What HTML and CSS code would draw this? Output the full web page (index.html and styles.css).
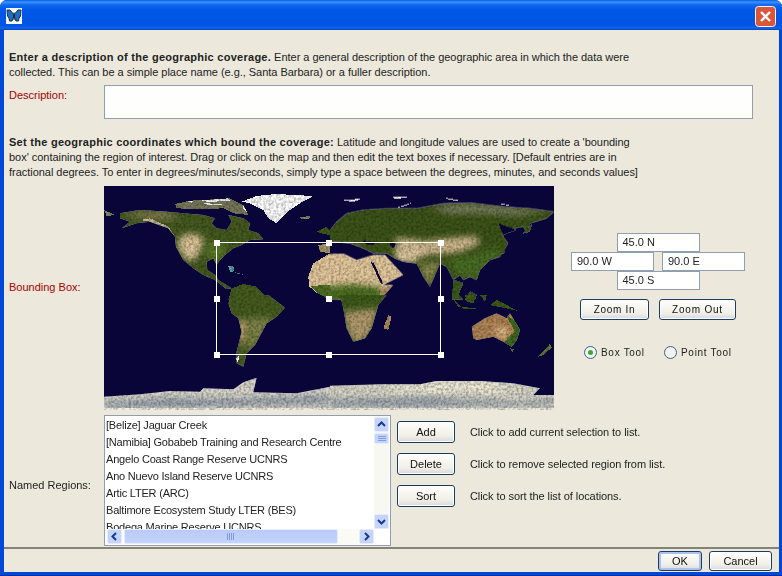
FILE: index.html
```html
<!DOCTYPE html>
<html>
<head>
<meta charset="utf-8">
<title>Geographic Coverage</title>
<link rel="stylesheet" href="styles.css">
</head>
<body>
<div class="window">
  <div class="titlebar">
    <svg class="app-icon" width="16" height="16" viewBox="0 0 16 16">
      <rect width="16" height="16" fill="#f4f8fc"/>
      <path d="M1 2 L4 2 L7.400 6 L7.600 9 L6 13 L3.500 13 L3 10 L1.500 8 Z" fill="#1c6fc0" stroke="#12304f" stroke-width="1"/>
      <path d="M15 2 L12 2 L8.600 6 L8.400 9 L10 13 L12.500 13 L13 10 L14.500 8 Z" fill="#1c6fc0" stroke="#12304f" stroke-width="1"/>
      <path d="M8 4.500 V12" stroke="#0c1c30" stroke-width="1"/>
    </svg>
    <svg class="close-icon" width="21" height="21" viewBox="0 0 21 21">
      <rect x=".5" y=".5" width="20" height="20" rx="3" fill="#d9563a" stroke="#f4f4f4"/>
      <path d="M6 6 L15 15 M15 6 L6 15" stroke="#fff" stroke-width="2.400"/>
    </svg>
  </div>
  <div class="content">
    <p class="intro intro-first"><b>Enter a description of the geographic coverage.</b> Enter a general description of the geographic area in which the data were<br>collected. This can be a simple place name (e.g., Santa Barbara) or a fuller description.</p>
    <div class="desc-row">
      <span class="label req desc-label">Description:</span>
      <div class="desc-box"></div>
    </div>
    <p class="intro intro-second"><b>Set the geographic coordinates which bound the coverage:</b> Latitude and longitude values are used to create a 'bounding<br>box' containing the region of interest. Drag or click on the map and then edit the text boxes if necessary. [Default entries are in<br>fractional degrees. To enter in degrees/minutes/seconds, simply type a space between the degrees, minutes, and seconds values]</p>
    <div class="map-row">
      <span class="label req map-label">Bounding Box:</span>
      <svg class="map" width="450" height="224" viewBox="0 0 450 224">
        <defs>
          <filter id="grain" x="0" y="0" width="100%" height="100%" color-interpolation-filters="sRGB">
            <feTurbulence type="fractalNoise" baseFrequency="0.4" numOctaves="2" seed="4" result="n"/>
            <feColorMatrix in="n" type="matrix" values=".7 0 0 0 .55  .7 0 0 0 .55  .7 0 0 0 .55  0 0 0 0 1" result="v"/>
            <feBlend in="SourceGraphic" in2="v" mode="multiply" result="m"/>
            <feComposite in="m" in2="SourceAlpha" operator="in"/>
          </filter>
          <filter id="soft" x="-30%" y="-30%" width="160%" height="160%"><feGaussianBlur stdDeviation="9"/></filter>
          <clipPath id="clip-na"><path d="M60,100 L120,90 L200,95 L250,100 L310,105 L345,115 L335,130 L350,145 L380,150 L395,125 L385,105 L430,115 L450,130 L445,150 L475,160 L490,178 L450,180 L425,195 L400,205 L375,225 L360,240 L350,255 L340,235 L320,245 L322,270 L345,285 L355,300 L370,310 L395,325 L380,328 L345,300 L310,285 L280,265 L250,240 L228,200 L225,170 L205,145 L150,125 L110,130 L65,145 L90,125 L60,115 Z"/></clipPath>
          <clipPath id="clip-eu"><path d="M20,125 L50,100 L100,90 L170,85 L260,85 L340,70 L420,68 L520,80 L600,85 L672,95 L650,115 L600,130 L590,160 L580,140 L530,150 L520,170 L535,190 L510,230 L480,240 L450,270 L440,300 L420,290 L400,300 L390,285 L370,300 L350,260 L330,250 L300,320 L280,290 L260,250 L220,245 L195,235 L170,220 L130,220 L100,205 L60,190 L0,185 L0,150 Z"/></clipPath>
          <clipPath id="clip-af"><path d="M0,222 L40,220 L80,240 L130,225 L165,225 L220,285 L160,315 L190,315 L150,360 H0 Z"/></clipPath>
          <clipPath id="clip-sa"><path d="M385,25 L395,0 L505,0 L555,38 L530,65 L500,85 L465,150 L440,175 L430,215 L410,205 L410,170 L425,110 L415,70 L395,55 Z"/></clipPath>
          <clipPath id="clip-sa2"><path d="M30,0 H170 L145,30 L125,100 L105,130 L70,140 L50,100 L40,40 Z"/></clipPath>
          <clipPath id="clip-au"><path d="M425,95 L465,70 L500,55 L530,70 L540,55 L570,105 L560,135 L545,155 L520,140 L490,125 L440,135 L430,130 Z"/></clipPath>
          <clipPath id="clip-an"><path d="M12,305 L120,298 L210,288 L300,290 L310,280 L400,283 L430,262 L470,248 L465,270 L460,292 L590,295 L690,275 V345 H12 Z"/></clipPath>
          <clipPath id="clip-an2"><path d="M0,272 L150,268 L270,268 L320,258 L450,258 L550,265 L630,280 L610,300 L672,300 V345 H0 Z"/></clipPath>
        </defs>
        <rect width="450" height="224" fill="#0a0538"/>
        <g filter="url(#grain)" class="land">
          <!-- north-west quadrant -->
          <g transform="translate(-4,-6) scale(.3333)">
            <path fill="#77785a" d="M225,72 L270,62 L390,55 L430,75 L445,105 L400,100 L370,85 L300,88 L230,85 Z"/>
            <path fill="#f2f2f2" d="M262,65 L280,62 L276,68 Z M300,62 L385,55 L390,62 L330,66 Z M310,70 L390,72 L330,76 Z M428,72 L440,95 L430,88 Z"/>
            <path fill="#fff" d="M425,65 L470,48 L530,42 L640,48 L600,70 L570,90 L530,130 L505,115 L490,90 L450,70 Z"/>
            <path fill="#7f8a66" d="M598,112 L632,108 L628,116 L605,116 Z M12,90 L45,105 L20,108 Z"/>
            <g clip-path="url(#clip-na)">
              <rect x="0" y="80" width="520" height="260" fill="#445a1e"/>
              <path fill="#7f7a50" filter="url(#soft)" d="M60,100 L200,90 L240,120 L130,120 Z"/>
              <path fill="#c8bc98" d="M120,120 L150,115 L205,140 L225,170 L215,160 L190,145 L150,125 Z"/>
              <path fill="#dcc498" filter="url(#soft)" d="M232,180 L262,160 L298,165 L312,182 L300,215 L285,240 L262,242 L238,210 Z"/>
              <path fill="#5f8028" filter="url(#soft)" d="M320,190 L350,185 L380,210 L350,245 L325,240 Z"/>
            </g>
            <path fill="#5aa8b0" d="M385,258 L400,258 L402,274 L390,276 Z"/>
            <path fill="#3f7f80" d="M404,276 L430,284 L412,282 Z"/>
            <path fill="#465c1e" d="M385,360 L395,325 L430,312 L470,320 L510,360 Z"/>
            <path fill="#a8966c" d="M655,195 L690,190 V220 L660,215 Z"/>
            <path fill="#3f5a1c" d="M650,155 L680,140 L690,150 V165 L670,162 Z"/>
            <path fill="#e4c89c" d="M625,290 L640,250 L690,220 V360 L650,338 L628,320 Z"/>
            <path fill="#4f7022" d="M632,318 L690,314 V360 L650,338 Z"/>
          </g>
          <!-- north-east quadrant -->
          <g transform="translate(226,-6) scale(.3333)">
            <path fill="#fff" d="M40,60 L95,56 L70,66 Z M172,52 L240,50 L205,56 Z M190,86 L250,66 L225,78 Z M342,52 L392,62 L360,60 Z M512,72 L560,74 L530,76 Z"/>
            <g clip-path="url(#clip-eu)">
              <rect x="0" y="60" width="672" height="300" fill="#3d5418"/>
              <path fill="#7c7f60" filter="url(#soft)" d="M300,80 L420,70 L540,82 L660,92 L560,108 L440,100 L350,100 Z"/>
              <path fill="#d0ba90" filter="url(#soft)" d="M195,172 L290,182 L340,175 L440,168 L450,190 L390,218 L300,225 L240,240 L205,240 Z"/>
              <path fill="#dcc69c" filter="url(#soft)" d="M190,210 L270,205 L260,245 L210,245 Z"/>
              <path fill="#4a6e20" filter="url(#soft)" d="M350,240 L440,220 L510,200 L510,240 L440,300 L380,290 Z"/>
              <path fill="#8a8a50" filter="url(#soft)" d="M265,250 L335,245 L300,320 L280,290 Z"/>
              <path fill="#a8966c" filter="url(#soft)" d="M0,190 L60,195 L100,208 L80,215 L0,210 Z"/>
            </g>
            <path fill="#0a0538" d="M180,185 L198,190 L192,205 L182,200 Z M100,183 L140,186 L130,194 L105,192 Z M505,130 L560,150 L520,165 Z"/>
            <path fill="#3d5a1a" d="M580,160 L608,130 L600,155 Z M490,232 L525,200 L525,218 Z"/>
            <g clip-path="url(#clip-af)">
              <rect x="0" y="210" width="240" height="150" fill="#e4c89c"/>
              <path fill="#4d7020" filter="url(#soft)" d="M-20,320 L70,312 L150,322 L170,370 H-20 Z"/>
              <path fill="#b48f62" d="M150,330 L190,315 L150,360 Z"/>
            </g>
            <path fill="#0a0538" d="M122,245 L132,250 L160,312 L152,310 Z"/>
            <path fill="#3d5a1a" d="M370,300 L400,310 L385,345 L400,360 L365,360 Z M405,360 L420,335 L440,345 L435,360 Z"/>
          </g>
          <!-- south-west quadrant -->
          <g transform="translate(-4,109) scale(.3333)">
            <g clip-path="url(#clip-sa)">
              <rect x="380" y="0" width="180" height="220" fill="#465c1e"/>
              <path fill="#7f8448" filter="url(#soft)" d="M440,70 L520,70 L470,150 L440,165 Z"/>
              <path fill="#d8b080" filter="url(#soft)" d="M416,70 L438,80 L436,130 L420,160 Z"/>
            </g>
            <path fill="#fff" d="M408,190 L418,180 L414,205 Z"/>
            <g clip-path="url(#clip-an)">
              <rect x="0" y="240" width="700" height="110" fill="#d8d6cc"/>
              <path fill="#8f9aa6" filter="url(#soft)" d="M12,322 L200,310 L400,312 L690,302 V325 L300,335 L12,335 Z"/>
              <rect x="0" y="338" width="700" height="8" fill="#f0eee4"/>
            </g>
          </g>
          <!-- south-east quadrant -->
          <g transform="translate(226,109) scale(.3333)">
            <g clip-path="url(#clip-sa2)">
              <rect x="0" y="0" width="200" height="150" fill="#3d5a1a"/>
              <path fill="#b09a6c" filter="url(#soft)" d="M40,50 L145,40 L125,110 L105,135 L70,145 L50,100 Z"/>
            </g>
            <path fill="#a88a5c" d="M160,100 L175,60 L185,65 L175,105 Z"/>
            <path fill="#3d5a1a" d="M360,0 L395,35 L385,35 Z M405,0 L440,0 L430,25 L410,20 Z M450,0 L470,0 L465,20 Z M395,35 L450,42 L400,42 Z M480,30 L500,15 L565,48 Z"/>
            <g clip-path="url(#clip-au)">
              <rect x="420" y="50" width="160" height="110" fill="#b08454"/>
              <path fill="#3f6a1e" d="M525,55 L580,100 L570,160 L520,150 L535,125 L555,110 Z"/>
              <path fill="#e8c494" filter="url(#soft)" d="M495,100 L530,95 L530,125 L505,125 Z"/>
            </g>
            <path fill="#5f7a3a" d="M625,185 L650,160 L660,145 L665,158 L640,180 Z M540,160 L552,162 L548,172 Z"/>
            <g clip-path="url(#clip-an2)">
              <rect x="0" y="250" width="680" height="100" fill="#d8d6c8"/>
              <path fill="#f0ecd8" filter="url(#soft)" d="M150,270 L270,272 L320,262 L450,262 L540,270 L500,295 L400,290 L300,295 L220,290 Z"/>
              <path fill="#98a2aa" filter="url(#soft)" d="M0,312 L300,306 L560,320 L672,310 V330 L300,335 L0,335 Z"/>
              <rect x="0" y="338" width="680" height="8" fill="#f0eee4"/>
            </g>
          </g>
        </g>
        <rect class="sel" x="112.500" y="56.500" width="224" height="112"/>
        <g class="handles">
          <rect x="110" y="54" width="6" height="6"/><rect x="222" y="54" width="6" height="6"/><rect x="334" y="54" width="6" height="6"/>
          <rect x="110" y="110" width="6" height="6"/><rect x="222" y="110" width="6" height="6"/><rect x="334" y="110" width="6" height="6"/>
          <rect x="110" y="166" width="6" height="6"/><rect x="222" y="166" width="6" height="6"/><rect x="334" y="166" width="6" height="6"/>
        </g>
      </svg>
      <div class="side">
        <div class="coords">
          <div class="coord-line"><div class="field">45.0 N</div></div>
          <div class="coord-line coord-mid"><div class="field">90.0 W</div><div class="field">90.0 E</div></div>
          <div class="coord-line"><div class="field">45.0 S</div></div>
        </div>
        <div class="zoom-btns">
          <button class="btn zoom-in">Zoom In</button>
          <button class="btn zoom-out">Zoom Out</button>
        </div>
        <div class="tools">
          <span class="tool tool-box"><i class="radio on"></i>Box Tool</span>
          <span class="tool"><i class="radio"></i>Point Tool</span>
        </div>
      </div>
    </div>
    <div class="region-row">
      <span class="label region-label">Named Regions:</span>
      <div class="list">
        <div class="items">
          <div class="item">[Belize] Jaguar Creek</div>
          <div class="item">[Namibia] Gobabeb Training and Research Centre</div>
          <div class="item">Angelo Coast Range Reserve UCNRS</div>
          <div class="item">Ano Nuevo Island Reserve UCNRS</div>
          <div class="item">Artic LTER (ARC)</div>
          <div class="item">Baltimore Ecosystem Study LTER (BES)</div>
          <div class="item">Bodega Marine Reserve UCNRS</div>
        </div>
        <div class="vbar">
          <span class="sb-btn"><svg width="11" height="11" viewBox="0 0 11 11"><path d="M2 7 L5.500 3.500 L9 7" class="chev"/></svg></span>
          <span class="vthumb"><svg width="8" height="5" viewBox="0 0 8 5"><path d="M0 .5 H8 M0 2.500 H8 M0 4.500 H8" class="grip"/></svg></span>
          <span class="vtrack"></span>
          <span class="sb-btn"><svg width="11" height="11" viewBox="0 0 11 11"><path d="M2 4 L5.500 7.500 L9 4" class="chev"/></svg></span>
        </div>
        <div class="hbar">
          <span class="sb-btn"><svg width="11" height="11" viewBox="0 0 11 11"><path d="M7 2 L3.500 5.500 L7 9" class="chev"/></svg></span>
          <span class="hthumb"><svg width="8" height="7" viewBox="0 0 8 7"><path d="M.5 0 V7 M2.500 0 V7 M4.500 0 V7 M6.500 0 V7" class="grip"/></svg></span>
          <span class="htrack"></span>
          <span class="sb-btn"><svg width="11" height="11" viewBox="0 0 11 11"><path d="M4 2 L7.500 5.500 L4 9" class="chev"/></svg></span>
        </div>
      </div>
      <div class="actions">
        <div class="action"><button class="btn act-btn">Add</button><span>Click to add current selection to list.</span></div>
        <div class="action"><button class="btn act-btn">Delete</button><span>Click to remove selected region from list.</span></div>
        <div class="action"><button class="btn act-btn">Sort</button><span>Click to sort the list of locations.</span></div>
      </div>
    </div>
    <div class="footer">
      <button class="btn ok">OK</button>
      <button class="btn cancel">Cancel</button>
    </div>
  </div>
</div>
</body>
</html>
```
FILE: styles.css
```css
* { box-sizing: border-box; }
html, body { margin: 0; padding: 0; background: #fff; }
body { width: 782px; height: 576px; overflow: hidden; font: 11px/15px "Liberation Sans", Arial, sans-serif; color: #222; }
.window { width: 782px; height: 576px; display: flex; flex-direction: column; background: #0048d8; border-radius: 7px 7px 0 0; overflow: hidden; padding: 0 3px 4px 4px; box-shadow: inset 0 -1px #00309c; }
.titlebar { height: 30px; margin: 0 -3px 0 -4px; padding: 6px 6px 0 6px; display: flex; align-items: flex-start; justify-content: space-between; flex: none;
  background: linear-gradient(#0a5bdc 0, #3a93ff 2px, #0f66ee 5px, #0058e8 10px, #0056e4 20px, #0353e4 26px, #0f68ea 28px, #0043c4 30px); }
.app-icon { margin-top: 2px; }
.content { flex: 1; background: #ece9dc; display: flex; flex-direction: column; padding-left: 5px; min-height: 0; }
.intro { margin: 0; white-space: nowrap; letter-spacing: -.03px; }
.intro b { letter-spacing: .27px; }
.intro-first { margin-top: 20px; height: 30px; }
.intro-second { margin-top: 16px; height: 45px; }
.desc-row { display: flex; margin-top: 5px; height: 34px; }
.label { width: 95px; flex: none; display: block; }
.req { color: #a80000; }
.desc-label { padding-top: 3px; }
.desc-box { width: 649px; height: 34px; background: #fefffc; border: 1px solid #8f9fae; }
.map-row { display: flex; margin-top: 6px; height: 224px; }
.map-label { align-self: center; padding-bottom: 22px; }
.map { flex: none; display: block; }
.land { shape-rendering: crispEdges; }
.sel { fill: none; stroke: #fff; stroke-width: 1; }
.handles rect { fill: #fff; }
.side { margin-left: 17px; padding-top: 47px; display: flex; flex-direction: column; width: 174px; }
.coords { display: flex; flex-direction: column; }
.coord-line { display: flex; justify-content: center; }
.coord-mid { justify-content: space-between; }
.field { width: 83px; height: 19px; background: #fff; border: 1px solid #8f9fae; padding-left: 5px; line-height: 17px; color: #222; }
.btn { font: 11px "Liberation Sans", Arial, sans-serif; color: #111; padding: 0; border: 1px solid #1c3d63; border-radius: 3px; background: linear-gradient(#fff 0, #f6f5ee 40%, #f0efe8 70%, #d8d8e0 100%); box-shadow: inset 0 0 0 1px #fdfdfb; }
.zoom-btns { display: flex; gap: 10px; margin: 9px 0 0 9px; }
.zoom-in { width: 69px; height: 21px; letter-spacing: .7px; font-size: 10px; }
.zoom-out { width: 77px; height: 21px; letter-spacing: .8px; font-size: 10px; }
.tools { display: flex; margin: 25px 0 0 13px; font-size: 10px; letter-spacing: .7px; }
.tool { display: flex; align-items: center; gap: 4px; }
.tool-box { width: 80px; }
.radio { width: 13px; height: 13px; border-radius: 50%; border: 1px solid #3a6288; background: #f2f2ee; display: flex; align-items: center; justify-content: center; }
.radio.on::after { content: ""; width: 5px; height: 5px; border-radius: 50%; background: #3aa83a; }
.region-row { display: flex; margin-top: 5px; height: 131px; }
.region-label { align-self: center; padding-top: 10px; }
.list { width: 287px; height: 131px; flex: none; background: #fff; border: 1px solid #8f9fae; display: grid; grid-template-columns: 1fr 15px; grid-template-rows: 113px 15px; padding: 0 1px 1px; }
.items { overflow: hidden; padding: 1px 0 0 0; }
.item { height: 17px; line-height: 17px; white-space: nowrap; color: #222; letter-spacing: -.2px; }
.vbar { display: flex; flex-direction: column; grid-row: 1; grid-column: 2; padding-top: 1px; background: #f8f8f2; }
.hbar { display: flex; grid-row: 2; grid-column: 1; padding-left: 1px; }
.sb-btn { width: 15px; height: 15px; flex: none; background: #c4d4fb; border: 1px solid #e6ecfb; border-radius: 2px; display: flex; align-items: center; justify-content: center; }
.chev { fill: none; stroke: #1a3a8a; stroke-width: 2; }
.grip { stroke: #7f9cdc; stroke-width: 1; fill: none; }
.vthumb { height: 11px; margin-top: 1px; flex: none; background: #c4d4fb; border: 1px solid #e6ecfb; border-radius: 2px; display: flex; align-items: center; justify-content: center; }
.vtrack { flex: 1; }
.hthumb { flex: none; width: 214px; margin-left: 2px; background: linear-gradient(#b8cbf8, #c4d4fb); border: 1px solid #e6ecfb; border-radius: 2px; display: flex; align-items: center; justify-content: center; }
.htrack { flex: 1; background: #fbfbf6; }
.actions { margin-left: 6px; padding-top: 6px; display: flex; flex-direction: column; gap: 10px; }
.action { display: flex; align-items: center; gap: 15px; height: 22px; letter-spacing: -.07px; }
.act-btn { width: 58px; height: 22px; letter-spacing: 0; }
.footer { margin-left: -5px; margin-top: 1px; height: 25px; border-top: 2px solid #84837a; display: flex; justify-content: flex-end; gap: 7px; padding: 2px 7px 0 0; }
.ok { width: 44px; height: 20px; box-shadow: inset 0 0 0 2px #a8c4ee; }
.cancel { width: 63px; height: 20px; }
```
